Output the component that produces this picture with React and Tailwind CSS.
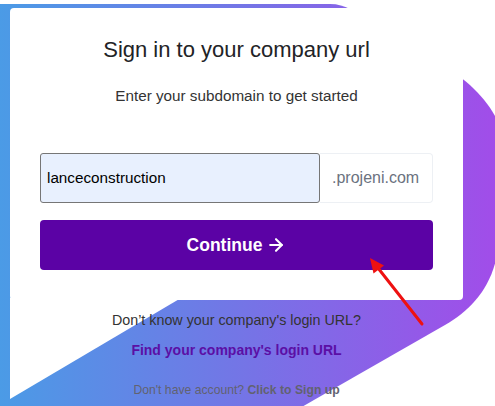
import React from "react";
import { ArrowRight } from "lucide-react";

export default function App() {
  return (
    <div className="relative w-[495px] h-[406px] overflow-hidden bg-white font-['Liberation_Sans',Arial,sans-serif]">
      <svg className="absolute inset-0" width="495" height="406" viewBox="0 0 495 406">
        <defs>
          <linearGradient id="bg" x1="0" y1="0" x2="495" y2="0" gradientUnits="userSpaceOnUse">
            <stop offset="0" stopColor="#4b9be6" />
            <stop offset="0.5" stopColor="#7574e6" />
            <stop offset="1" stopColor="#a14de9" />
          </linearGradient>
        </defs>
        <path
          d="M0,4 L330,4 C338,4 344,6 350,9 L440,63 C460,75 485,95 497,120 L497,255 C490,290 470,310 445,325 L300,408 L0,408 Z"
          fill="url(#bg)"
        />
        <path d="M10,298 L181,298 L10,399 Z" fill="#ffffff" />
      </svg>

      <div className="relative ml-[10px] pt-[8px] w-[453px] flex flex-col items-center">
        <div className="w-full bg-white rounded-[4px] px-[30px] pt-[29px] pb-[30px] flex flex-col items-center">
          <h1 className="text-[22px] leading-[26px] text-[#222326] font-normal">
            Sign in to your company url
          </h1>
          <p className="mt-[23px] text-[15.25px] leading-[20px] text-[#333333]">
            Enter your subdomain to get started
          </p>
          <div className="mt-[47px] flex w-full h-[50px]">
            <div className="w-[280px] h-full bg-[#e8f0fe] border border-[#767676] rounded-[3px] flex items-center pl-[6px] text-[15.25px] text-black">
              lanceconstruction
            </div>
            <div className="flex-1 h-full bg-white border-y border-r border-[#edf0f4] rounded-r-[4px] flex items-center pl-[12px] text-[16px] text-[#6b7280]">
              .projeni.com
            </div>
          </div>
          <button className="mt-[17px] w-full h-[50px] rounded-[4px] bg-[#5b02a5] text-white flex items-center justify-center gap-[4px] text-[17.5px] font-bold">
            <span>Continue</span>
            <ArrowRight size={20} strokeWidth={2.5} />
          </button>
        </div>

        <p className="mt-[11px] text-[14.3px] leading-[18px] text-[#333333]">
          Don’t know your company's login URL?
        </p>
        <p className="mt-[12px] text-[14px] leading-[18px] font-bold text-[#5b0fa5]">
          Find your company's login URL
        </p>
        <p className="mt-[23px] text-[12.2px] leading-[16px] text-[#626270]">
          Don't have account? <span className="font-bold">Click to Sign up</span>
        </p>
      </div>

      <svg className="absolute inset-0 pointer-events-none" width="495" height="406" viewBox="0 0 495 406">
        <line x1="422" y1="324" x2="378" y2="268" stroke="#ee1111" strokeWidth="3" strokeLinecap="round" />
        <polygon points="370,258 384,265.5 373.5,273.5" fill="#ee1111" />
      </svg>
    </div>
  );
}
